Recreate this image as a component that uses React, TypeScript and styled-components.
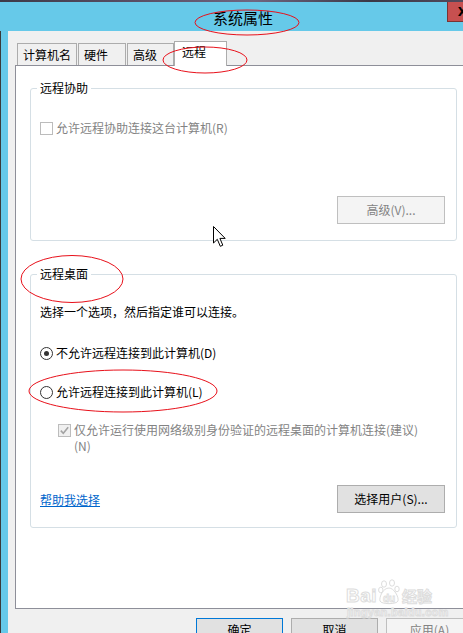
import React from 'react';
import styled, { createGlobalStyle } from 'styled-components';

const Global = createGlobalStyle`
  html, body { margin: 0; padding: 0; background: #F0F0F0; }
  body {
    font-family: "Noto Sans CJK SC", "Noto Sans", "Liberation Sans", sans-serif;
    font-size: 12px;
    color: #000;
  }
`;

const Window = styled.div`
  position: relative;
  width: 463px;
  height: 633px;
  overflow: hidden;
  background: #F0F0F0;
  display: flex;
  flex-direction: column;
`;

const TopStrip = styled.div`
  flex: none;
  height: 2px;
  background: linear-gradient(90deg, #3d3a48 0%, #5a4f66 30%, #6f6580 55%, #3b3846 80%, #524a5d 100%);
`;

const TitleBar = styled.div`
  flex: none;
  height: 29px;
  background: #66C9E9;
  display: grid;
  grid-template-columns: 1fr 16px;
  align-items: start;
`;

const Title = styled.div`
  padding-left: 39px;
  text-align: center;
  font-size: 15px;
  line-height: 29px;
  padding-top: 1px;
  color: #000;
`;

const CloseButton = styled.div`
  width: 30px;
  height: 20px;
  background: #C75050;
  border-left: 1px solid #7a3333;
  border-bottom: 1px solid #7a3333;
  box-sizing: border-box;
  display: flex;
  align-items: center;
  justify-content: center;
  font-family: "DejaVu Sans", sans-serif;
  font-weight: bold;
  font-size: 12px;
  color: #000;
`;

const Body = styled.div`
  flex: 1;
  display: flex;
  min-height: 0;
`;

const Frame = styled.div`
  flex: none;
  width: 8px;
  background: linear-gradient(90deg, #3a3a3a 0 1px, #66C9E9 1px 8px);
`;

const Client = styled.div`
  flex: none;
  display: flex;
  flex-direction: column;
  padding: 10px 0 0 7px;
`;

const TabStrip = styled.div`
  flex: none;
  display: flex;
  align-items: flex-end;
  height: 24px;
  padding-left: 2px;
  position: relative;
  z-index: 1;
`;

const Tab = styled.div<{ $w: number; $active?: boolean }>`
  box-sizing: border-box;
  width: ${p => p.$w}px;
  height: ${p => (p.$active ? 25 : 22)}px;
  margin-left: ${p => (p.$active ? -1 : 0)}px;
  margin-right: ${p => (p.$active ? 0 : 1)}px;
  margin-bottom: ${p => (p.$active ? -1 : 0)}px;
  border: 1px solid #ACACAC;
  border-bottom: none;
  background: ${p => (p.$active ? '#FFFFFF' : '#F0F0F0')};
  padding-left: ${p => (p.$active ? 7 : 5)}px;
  padding-top: ${p => (p.$active ? 2 : 3)}px;
  line-height: 16px;
  white-space: nowrap;
`;

const Panel = styled.div`
  flex: none;
  box-sizing: border-box;
  width: 458px;
  height: 544px;
  background: #FFFFFF;
  border: 1px solid #8E8F99;
  padding: 14px 0 0 14px;
  display: flex;
  flex-direction: column;
  gap: 25px;
`;

const Group = styled.fieldset<{ $pb: number }>`
  box-sizing: border-box;
  width: 427px;
  margin: 0;
  border: 1px solid #D5DFE5;
  border-radius: 3px;
  padding: 0 11px ${p => p.$pb}px 9px;
  display: flex;
  flex-direction: column;
  align-items: stretch;
  min-inline-size: 0;
`;

const Legend = styled.legend`
  padding: 0 3px;
  margin-left: -3px;
  line-height: 16px;
  font-size: 12px;
`;

const Row = styled.div<{ $mt: number; $indent?: number }>`
  display: flex;
  align-items: flex-start;
  margin-top: ${p => p.$mt}px;
  padding-left: ${p => p.$indent ?? 0}px;
  line-height: 16px;
`;

const Text = styled.div<{ $disabled?: boolean }>`
  color: ${p => (p.$disabled ? '#838383' : '#000')};
  line-height: 16px;
  white-space: nowrap;
`;

const Box = styled.span<{ $disabled?: boolean; $checked?: boolean }>`
  flex: none;
  box-sizing: border-box;
  width: 13px;
  height: 13px;
  margin-top: 2px;
  margin-right: 3px;
  border: 1px solid ${p => (p.$disabled ? '#BCBCBC' : '#333')};
  background: ${p => (p.$disabled ? (p.$checked ? '#F0F0F0' : '#FFFFFF') : '#FFFFFF')};
  display: flex;
  align-items: center;
  justify-content: center;
`;

const Radio = styled.span<{ $checked?: boolean }>`
  flex: none;
  box-sizing: border-box;
  width: 13px;
  height: 13px;
  margin-top: 2px;
  margin-right: 3px;
  border: 1px solid #333;
  border-radius: 50%;
  background: #FFF;
  display: flex;
  align-items: center;
  justify-content: center;
  &::after {
    content: '';
    display: ${p => (p.$checked ? 'block' : 'none')};
    width: 5px;
    height: 5px;
    border-radius: 50%;
    background: #333;
  }
`;

const ActionRow = styled.div<{ $mt: number; $split?: boolean }>`
  display: flex;
  align-items: center;
  justify-content: ${p => (p.$split ? 'space-between' : 'flex-end')};
  margin-top: ${p => p.$mt}px;
`;

const Button = styled.div<{ $w: number; $h: number; $disabled?: boolean; $default?: boolean }>`
  box-sizing: border-box;
  width: ${p => p.$w}px;
  height: ${p => p.$h}px;
  flex: none;
  border: 1px solid ${p => (p.$default ? '#0078D7' : p.$disabled ? '#BFBFBF' : '#ADADAD')};
  background: ${p => (p.$disabled ? '#F4F4F4' : '#E1E1E1')};
  color: ${p => (p.$disabled ? '#838383' : '#000')};
  display: flex;
  align-items: center;
  justify-content: center;
  line-height: 16px;
  white-space: nowrap;
`;

const Link = styled.span`
  color: #0066CC;
  text-decoration: underline;
  line-height: 16px;
  margin-top: 1px;
`;

const DialogButtons = styled.div`
  flex: none;
  display: flex;
  justify-content: flex-end;
  gap: 8px;
  width: 458px;
  margin-top: 9px;
`;

const Overlay = styled.svg`
  position: absolute;
  left: 0;
  top: 0;
  pointer-events: none;
  z-index: 5;
`;

const Watermark = styled.div`
  position: absolute;
  left: 346px;
  top: 577px;
  z-index: 4;
  pointer-events: none;
  display: flex;
  flex-direction: column;
  align-items: flex-start;
  color: #FFFFFF;
  -webkit-text-stroke: 1px #DDDDDD;
`;

const MarkTop = styled.div`
  display: flex;
  align-items: flex-end;
  height: 28px;
`;

const MarkWord = styled.span`
  font-family: "Liberation Sans", Arial, sans-serif;
  font-weight: bold;
  font-size: 19px;
  line-height: 18px;
  letter-spacing: 0.5px;
`;

const MarkCJK = styled.span`
  font-family: "Noto Sans CJK SC", sans-serif;
  font-weight: bold;
  font-size: 15px;
  line-height: 18px;
  margin-left: 2px;
`;

const MarkUrl = styled.span`
  font-family: "Liberation Sans", Arial, sans-serif;
  font-weight: bold;
  font-size: 11px;
  line-height: 12px;
  margin-top: 1px;
  margin-left: 1px;
  letter-spacing: 0.3px;
`;

const Paw = () => (
  <svg width="22" height="26" viewBox="0 0 22 26" style={{ marginLeft: 1 }}>
    <g fill="#FFFFFF" stroke="#DDDDDD" strokeWidth="1">
      <ellipse cx="6" cy="5" rx="2.5" ry="3.2" />
      <ellipse cx="14" cy="4" rx="2.5" ry="3.2" />
      <ellipse cx="2.8" cy="11" rx="2.2" ry="2.8" />
      <ellipse cx="19" cy="10" rx="2.2" ry="2.8" />
      <path d="M11 9 C 5 9, 1 18, 2 22 C 3 25.5, 19 25.5, 20 22 C 21 18, 16 9, 11 9 Z" />
    </g>
    <text x="11" y="22.5" textAnchor="middle" fontFamily="Liberation Sans, Arial, sans-serif" fontWeight="bold" fontSize="10" fill="#FFFFFF" stroke="#DDDDDD" strokeWidth="0.8">du</text>
  </svg>
);

const CheckMark = ({ color }: { color: string }) => (
  <svg width="11" height="11" viewBox="0 0 11 11">
    <path d="M1.8 5.6 L4.3 8.2 L9.2 2.3" fill="none" stroke={color} strokeWidth="1.6" />
  </svg>
);

export default function App() {
  return (
    <>
      <Global />
      <Window>
        <TopStrip />
        <TitleBar>
          <Title>系统属性</Title>
          <CloseButton>X</CloseButton>
        </TitleBar>
        <Body>
          <Frame />
          <Client>
            <TabStrip>
              <Tab $w={60}>计算机名</Tab>
              <Tab $w={48}>硬件</Tab>
              <Tab $w={47}>高级</Tab>
              <Tab $w={53} $active>远程</Tab>
            </TabStrip>
            <Panel>
              <Group $pb={16}>
                <Legend>远程协助</Legend>
                <Row $mt={24}>
                  <Box $disabled />
                  <Text $disabled>允许远程协助连接这台计算机(R)</Text>
                </Row>
                <ActionRow $mt={60}>
                  <Button $w={108} $h={28} $disabled>高级(V)...</Button>
                </ActionRow>
              </Group>
              <Group $pb={14}>
                <Legend>远程桌面</Legend>
                <Row $mt={22}>
                  <Text>选择一个选项，然后指定谁可以连接。</Text>
                </Row>
                <Row $mt={25}>
                  <Radio $checked />
                  <Text>不允许远程连接到此计算机(D)</Text>
                </Row>
                <Row $mt={23}>
                  <Radio />
                  <Text>允许远程连接到此计算机(L)</Text>
                </Row>
                <Row $mt={22} $indent={18}>
                  <Box $disabled $checked>
                    <CheckMark color="#A3A3A3" />
                  </Box>
                  <Text $disabled>
                    仅允许运行使用网络级别身份验证的远程桌面的计算机连接(建议)
                    <br />
                    (N)
                  </Text>
                </Row>
                <ActionRow $mt={31} $split>
                  <Link>帮助我选择</Link>
                  <Button $w={108} $h={28}>选择用户(S)...</Button>
                </ActionRow>
              </Group>
            </Panel>
            <DialogButtons>
              <Button $w={87} $h={24} $default>确定</Button>
              <Button $w={87} $h={24}>取消</Button>
              <Button $w={87} $h={24} $disabled>应用(A)</Button>
            </DialogButtons>
          </Client>
        </Body>

        <Watermark>
          <MarkTop>
            <MarkWord>Bai</MarkWord>
            <Paw />
            <MarkCJK>经验</MarkCJK>
          </MarkTop>
          <MarkUrl>jingyan.baidu.com</MarkUrl>
        </Watermark>

        <Overlay width="463" height="633" viewBox="0 0 463 633">
          <g fill="none" stroke="#E8101A" strokeWidth="1">
            <ellipse cx="247" cy="22.5" rx="52" ry="12.5" />
            <ellipse cx="205" cy="60" rx="42" ry="13" />
            <ellipse cx="72" cy="279" rx="51" ry="23.5" />
            <ellipse cx="123" cy="391" rx="94" ry="21" />
          </g>
          <path
            d="M213.5 226.5 L213.5 243 L217.3 239.3 L220.3 246.3 L222.8 245.2 L219.9 238.4 L225.2 238.4 Z"
            fill="#FFFFFF"
            stroke="#000"
            strokeWidth="1"
            strokeLinejoin="miter"
          />
        </Overlay>
      </Window>
    </>
  );
}
